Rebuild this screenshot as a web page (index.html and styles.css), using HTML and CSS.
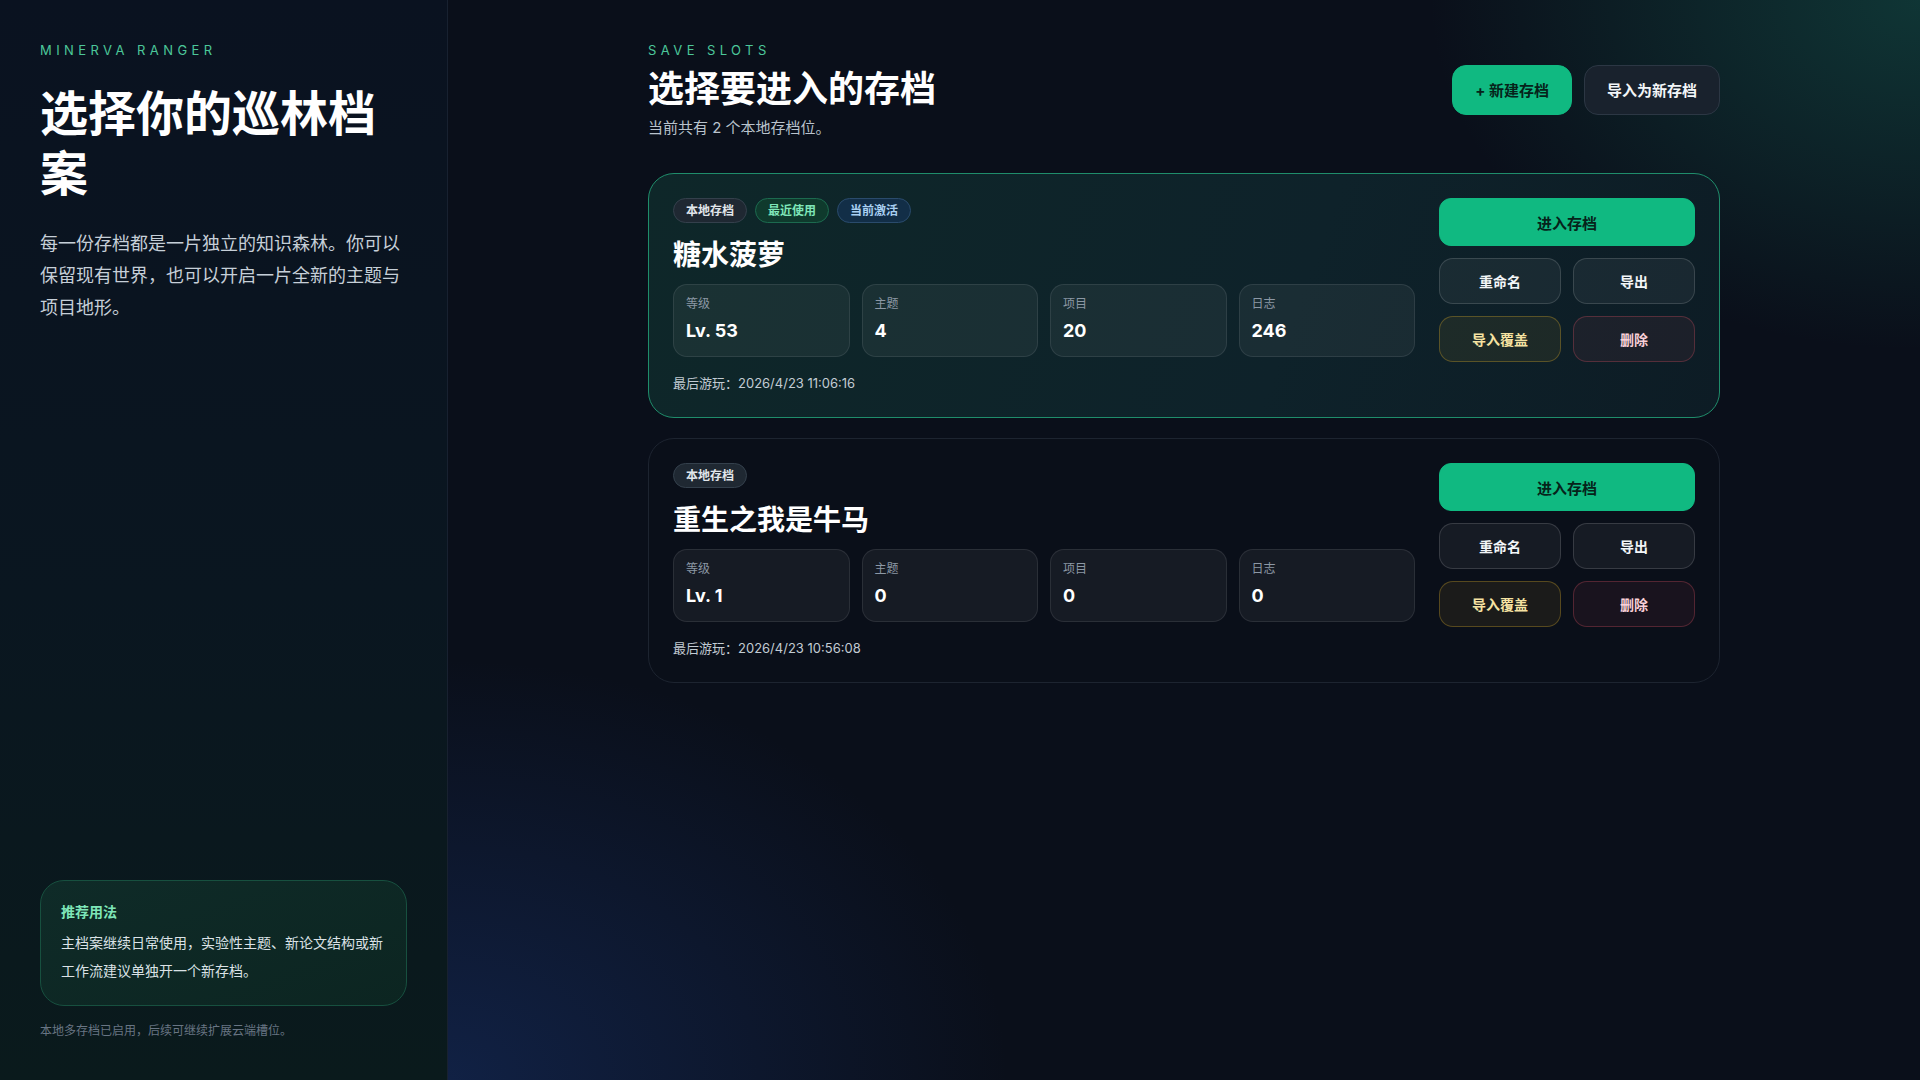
FILE: index.html
```html
<!DOCTYPE html>
<html lang="zh-CN">
<head>
<meta charset="UTF-8">
<meta name="viewport" content="width=device-width, initial-scale=1.0">
<title>Minerva Ranger - 存档</title>
<link rel="stylesheet" href="styles.css">
</head>
<body>

<aside class="sidebar">
  <div class="eyebrow">MINERVA RANGER</div>
  <h1 class="side-title">选择你的巡林档案</h1>
  <p class="side-text">每一份存档都是一片独立的知识森林。你可以保留现有世界，也可以开启一片全新的主题与项目地形。</p>

  <div class="side-bottom">
    <div class="tip-card">
      <div class="tip-title">推荐用法</div>
      <p class="tip-text">主档案继续日常使用，实验性主题、新论文结构或新工作流建议单独开一个新存档。</p>
    </div>
    <div class="side-foot">本地多存档已启用，后续可继续扩展云端槽位。</div>
  </div>
</aside>

<main class="main">
  <div class="content">
    <header class="page-head">
      <div>
        <div class="eyebrow">SAVE SLOTS</div>
        <h2 class="page-title">选择要进入的存档</h2>
        <p class="page-sub">当前共有 2 个本地存档位。</p>
      </div>
      <div class="head-actions">
        <button class="btn btn-primary">+ 新建存档</button>
        <button class="btn btn-ghost">导入为新存档</button>
      </div>
    </header>

    <section class="slot slot-active">
      <div class="slot-info">
        <div class="tags">
          <span class="tag">本地存档</span>
          <span class="tag tag-green">最近使用</span>
          <span class="tag tag-blue">当前激活</span>
        </div>
        <h3 class="slot-name">糖水菠萝</h3>
        <div class="stats">
          <div class="stat"><div class="stat-label">等级</div><div class="stat-value">Lv. 53</div></div>
          <div class="stat"><div class="stat-label">主题</div><div class="stat-value">4</div></div>
          <div class="stat"><div class="stat-label">项目</div><div class="stat-value">20</div></div>
          <div class="stat"><div class="stat-label">日志</div><div class="stat-value">246</div></div>
        </div>
        <div class="last-play">最后游玩：2026/4/23 11:06:16</div>
      </div>
      <div class="slot-actions">
        <button class="act act-enter">进入存档</button>
        <button class="act">重命名</button>
        <button class="act">导出</button>
        <button class="act act-warn">导入覆盖</button>
        <button class="act act-danger">删除</button>
      </div>
    </section>

    <section class="slot">
      <div class="slot-info">
        <div class="tags">
          <span class="tag">本地存档</span>
        </div>
        <h3 class="slot-name">重生之我是牛马</h3>
        <div class="stats">
          <div class="stat"><div class="stat-label">等级</div><div class="stat-value">Lv. 1</div></div>
          <div class="stat"><div class="stat-label">主题</div><div class="stat-value">0</div></div>
          <div class="stat"><div class="stat-label">项目</div><div class="stat-value">0</div></div>
          <div class="stat"><div class="stat-label">日志</div><div class="stat-value">0</div></div>
        </div>
        <div class="last-play">最后游玩：2026/4/23 10:56:08</div>
      </div>
      <div class="slot-actions">
        <button class="act act-enter">进入存档</button>
        <button class="act">重命名</button>
        <button class="act">导出</button>
        <button class="act act-warn">导入覆盖</button>
        <button class="act act-danger">删除</button>
      </div>
    </section>
  </div>
</main>

</body>
</html>
```

FILE: styles.css
```css
* {
  box-sizing: border-box;
}

body, html {
  margin: 0;
  padding: 0;
  height: 100%;
  font-family: Inter, "Noto Sans CJK SC", sans-serif;
  color: #f3f6f8;
  background: #0a0f1a;
}

body {
  display: flex;
  overflow: hidden;
}

button {
  font-family: inherit;
  cursor: pointer;
}

/* ---- sidebar ---- */
.sidebar {
  width: 448px;
  flex-shrink: 0;
  height: 100vh;
  padding: 40px;
  display: flex;
  flex-direction: column;
  background: linear-gradient(180deg, #0a1220 0%, #0a1620 55%, #0a1a1c 100%);
  border-right: 1px solid #182130;
}

.eyebrow {
  font-size: 13px;
  line-height: 20px;
  letter-spacing: 0.34em;
  color: #4cc79a;
}

.side-title {
  margin: 24px 0 0;
  font-size: 48px;
  line-height: 60px;
  font-weight: 700;
  color: #ffffff;
}

.side-text {
  margin: 24px 0 0;
  font-size: 18px;
  line-height: 32px;
  color: #c6cfd8;
}

.side-bottom {
  margin-top: auto;
}

.tip-card {
  padding: 20px;
  border-radius: 24px;
  border: 1px solid #17503f;
  background: linear-gradient(160deg, #0f2b28 0%, #0c2521 100%);
}

.tip-title {
  font-size: 14px;
  line-height: 22px;
  font-weight: 700;
  color: #7ee6b8;
}

.tip-text {
  margin: 6px 0 0;
  font-size: 14px;
  line-height: 28px;
  color: #dbe2e6;
}

.side-foot {
  margin-top: 16px;
  font-size: 12px;
  line-height: 18px;
  color: #687583;
}

/* ---- main ---- */
.main {
  flex: 1;
  height: 100vh;
  padding: 40px 24px;
  background:
    radial-gradient(ellipse 700px 500px at 100% 0%, rgba(22, 100, 86, 0.45), transparent 70%),
    radial-gradient(ellipse 800px 600px at 0% 100%, rgba(25, 55, 120, 0.45), transparent 70%),
    #0a0f1a;
}

.content {
  width: 1072px;
  margin: 0 auto;
}

.page-head {
  display: flex;
  align-items: center;
  justify-content: space-between;
  margin-bottom: 34px;
}

.page-title {
  margin: 8px 0 0;
  font-size: 36px;
  line-height: 43px;
  font-weight: 700;
  color: #ffffff;
}

.page-sub {
  margin: 6px 0 0;
  font-size: 15px;
  line-height: 22px;
  color: #b9c3cd;
}

.head-actions {
  display: flex;
  gap: 12px;
}

.btn {
  height: 50px;
  padding: 0 22px;
  border-radius: 14px;
  font-size: 15px;
  font-weight: 700;
}

.btn-primary {
  border: 1px solid #10b981;
  background: #10b981;
  color: #06231a;
}

.btn-ghost {
  border: 1px solid #2c3744;
  background: #19222d;
  color: #f3f6f8;
}

/* ---- slot cards ---- */
.slot {
  display: grid;
  grid-template-columns: 1fr 256px;
  gap: 24px;
  padding: 24px;
  margin-bottom: 20px;
  border-radius: 26px;
  border: 1px solid #1d2430;
  background: #0a0f19;
}

.slot-active {
  border-color: #1f8d6b;
  background: linear-gradient(110deg, #0e2729 0%, #0e222a 60%, #0d1c25 100%);
}

.tags {
  display: flex;
  gap: 8px;
}

.tag {
  padding: 3px 12px;
  font-size: 12px;
  line-height: 17px;
  font-weight: 700;
  border-radius: 999px;
  border: 1px solid #34404c;
  background: #1f2832;
  color: #e1e6eb;
}

.tag-green {
  border-color: #1c6a4f;
  background: #0f3a2d;
  color: #7ee6b8;
}

.tag-blue {
  border-color: #2a4b6c;
  background: #122e47;
  color: #a9d0f2;
}

.slot-name {
  margin: 14px 0 0;
  font-size: 28px;
  line-height: 36px;
  font-weight: 700;
  color: #ffffff;
}

.stats {
  margin-top: 11px;
  display: grid;
  grid-template-columns: repeat(4, 1fr);
  gap: 12px;
}

.stat {
  padding: 10px 12px 12px;
  border-radius: 14px;
  border: 1px solid rgba(255, 255, 255, 0.09);
  background: rgba(255, 255, 255, 0.05);
}

.stat-label {
  font-size: 12px;
  line-height: 18px;
  color: #8c98a5;
}

.stat-value {
  margin-top: 5px;
  font-size: 18px;
  line-height: 26px;
  font-weight: 700;
  color: #ffffff;
}

.last-play {
  margin-top: 16px;
  font-size: 13px;
  line-height: 20px;
  color: #c2cbd3;
}

.slot-actions {
  display: grid;
  grid-template-columns: 1fr 1fr;
  gap: 12px;
  align-content: start;
}

.act {
  height: 46px;
  border-radius: 14px;
  font-size: 14px;
  font-weight: 700;
  border: 1px solid rgba(255, 255, 255, 0.14);
  background: rgba(255, 255, 255, 0.05);
  color: #f3f6f8;
}

.act-enter {
  grid-column: span 2;
  height: 48px;
  border-radius: 12px;
  font-size: 15px;
  border-color: #10b981;
  background: #10b981;
  color: #06231a;
}

.act-warn {
  border-color: rgba(202, 160, 40, 0.35);
  background: rgba(202, 160, 40, 0.09);
  color: #f6e3a2;
}

.act-danger {
  border-color: rgba(220, 80, 100, 0.3);
  background: rgba(220, 80, 100, 0.07);
  color: #f9d0d8;
}
```
